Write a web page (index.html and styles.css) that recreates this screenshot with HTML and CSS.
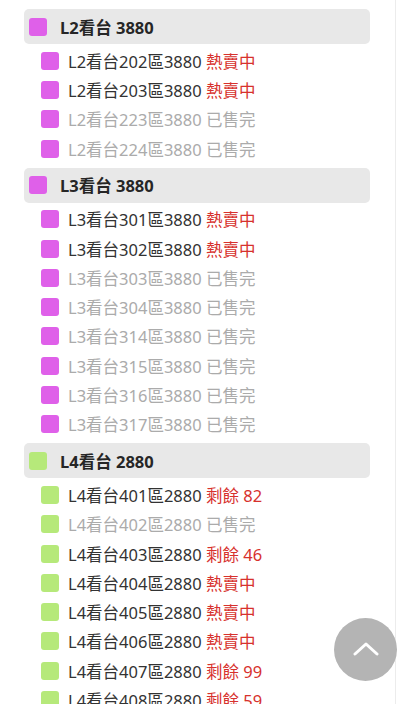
FILE: index.html
```html
<!DOCTYPE html>
<html lang="zh-Hant">
<head>
<meta charset="utf-8">
<title>座位區</title>
<link rel="stylesheet" href="styles.css">
</head>
<body>
<div class="page">
  <section class="group">
    <div class="group-head"><span class="sw pink"></span><span>L2看台 3880</span></div>
    <ul class="items">
      <li class="item"><span class="sw pink"></span><span class="name">L2看台202區3880 <span class="hot">熱賣中</span></span></li>
      <li class="item"><span class="sw pink"></span><span class="name">L2看台203區3880 <span class="hot">熱賣中</span></span></li>
      <li class="item sold"><span class="sw pink"></span><span class="name">L2看台223區3880 已售完</span></li>
      <li class="item sold"><span class="sw pink"></span><span class="name">L2看台224區3880 已售完</span></li>
    </ul>
  </section>
  <section class="group">
    <div class="group-head"><span class="sw pink"></span><span>L3看台 3880</span></div>
    <ul class="items">
      <li class="item"><span class="sw pink"></span><span class="name">L3看台301區3880 <span class="hot">熱賣中</span></span></li>
      <li class="item"><span class="sw pink"></span><span class="name">L3看台302區3880 <span class="hot">熱賣中</span></span></li>
      <li class="item sold"><span class="sw pink"></span><span class="name">L3看台303區3880 已售完</span></li>
      <li class="item sold"><span class="sw pink"></span><span class="name">L3看台304區3880 已售完</span></li>
      <li class="item sold"><span class="sw pink"></span><span class="name">L3看台314區3880 已售完</span></li>
      <li class="item sold"><span class="sw pink"></span><span class="name">L3看台315區3880 已售完</span></li>
      <li class="item sold"><span class="sw pink"></span><span class="name">L3看台316區3880 已售完</span></li>
      <li class="item sold"><span class="sw pink"></span><span class="name">L3看台317區3880 已售完</span></li>
    </ul>
  </section>
  <section class="group">
    <div class="group-head"><span class="sw green"></span><span>L4看台 2880</span></div>
    <ul class="items">
      <li class="item"><span class="sw green"></span><span class="name">L4看台401區2880 <span class="hot">剩餘 82</span></span></li>
      <li class="item sold"><span class="sw green"></span><span class="name">L4看台402區2880 已售完</span></li>
      <li class="item"><span class="sw green"></span><span class="name">L4看台403區2880 <span class="hot">剩餘 46</span></span></li>
      <li class="item"><span class="sw green"></span><span class="name">L4看台404區2880 <span class="hot">熱賣中</span></span></li>
      <li class="item"><span class="sw green"></span><span class="name">L4看台405區2880 <span class="hot">熱賣中</span></span></li>
      <li class="item"><span class="sw green"></span><span class="name">L4看台406區2880 <span class="hot">熱賣中</span></span></li>
      <li class="item"><span class="sw green"></span><span class="name">L4看台407區2880 <span class="hot">剩餘 99</span></span></li>
      <li class="item"><span class="sw green"></span><span class="name">L4看台408區2880 <span class="hot">剩餘 59</span></span></li>
    </ul>
  </section>
</div>
<button class="to-top" type="button" aria-label="回到頂部">
  <svg width="26" height="14" viewBox="0 0 26 14"><path d="M2 12 L13 2 L24 12" fill="none" stroke="#fff" stroke-width="3" stroke-linecap="round" stroke-linejoin="round"/></svg>
</button>
</body>
</html>
```
FILE: styles.css
```css
html, body {
  margin: 0;
  padding: 0;
  background: #fff;
}
body {
  font-family: "Noto Sans", "Noto Sans CJK TC", sans-serif;
  color: #2a2a2a;
  height: 704px;
  overflow: hidden;
}
.page {
  width: 346px;
  padding: 9px 25px 0 24px;
  border-right: 1px solid #ececec;
  min-height: 704px;
}
.group {
  margin-bottom: 4.4px;
}
.group-head {
  display: flex;
  align-items: center;
  gap: 13px;
  height: 35px;
  padding-left: 5px;
  background: #e8e8e8;
  border-radius: 5px;
  font-size: 16.5px;
  font-weight: 700;
  color: #262626;
}
.sw {
  flex: none;
  width: 18px;
  height: 18px;
  border-radius: 3px;
}
.pink { background: #df60e9; }
.green { background: #b6e97a; }
.items {
  list-style: none;
  margin: 2px 0 0;
  padding: 0;
}
.item {
  display: flex;
  align-items: center;
  gap: 9px;
  height: 29.3px;
  padding-left: 17px;
  font-size: 16.5px;
  color: #333;
  white-space: nowrap;
}
.item.sold {
  color: #ababab;
}
.hot {
  color: #d7312d;
}
.to-top {
  position: fixed;
  right: 3px;
  bottom: 23px;
  width: 63px;
  height: 63px;
  border: none;
  border-radius: 50%;
  background: #b4b4b4;
  display: flex;
  align-items: center;
  justify-content: center;
  padding: 0 0 2px;
}
```
